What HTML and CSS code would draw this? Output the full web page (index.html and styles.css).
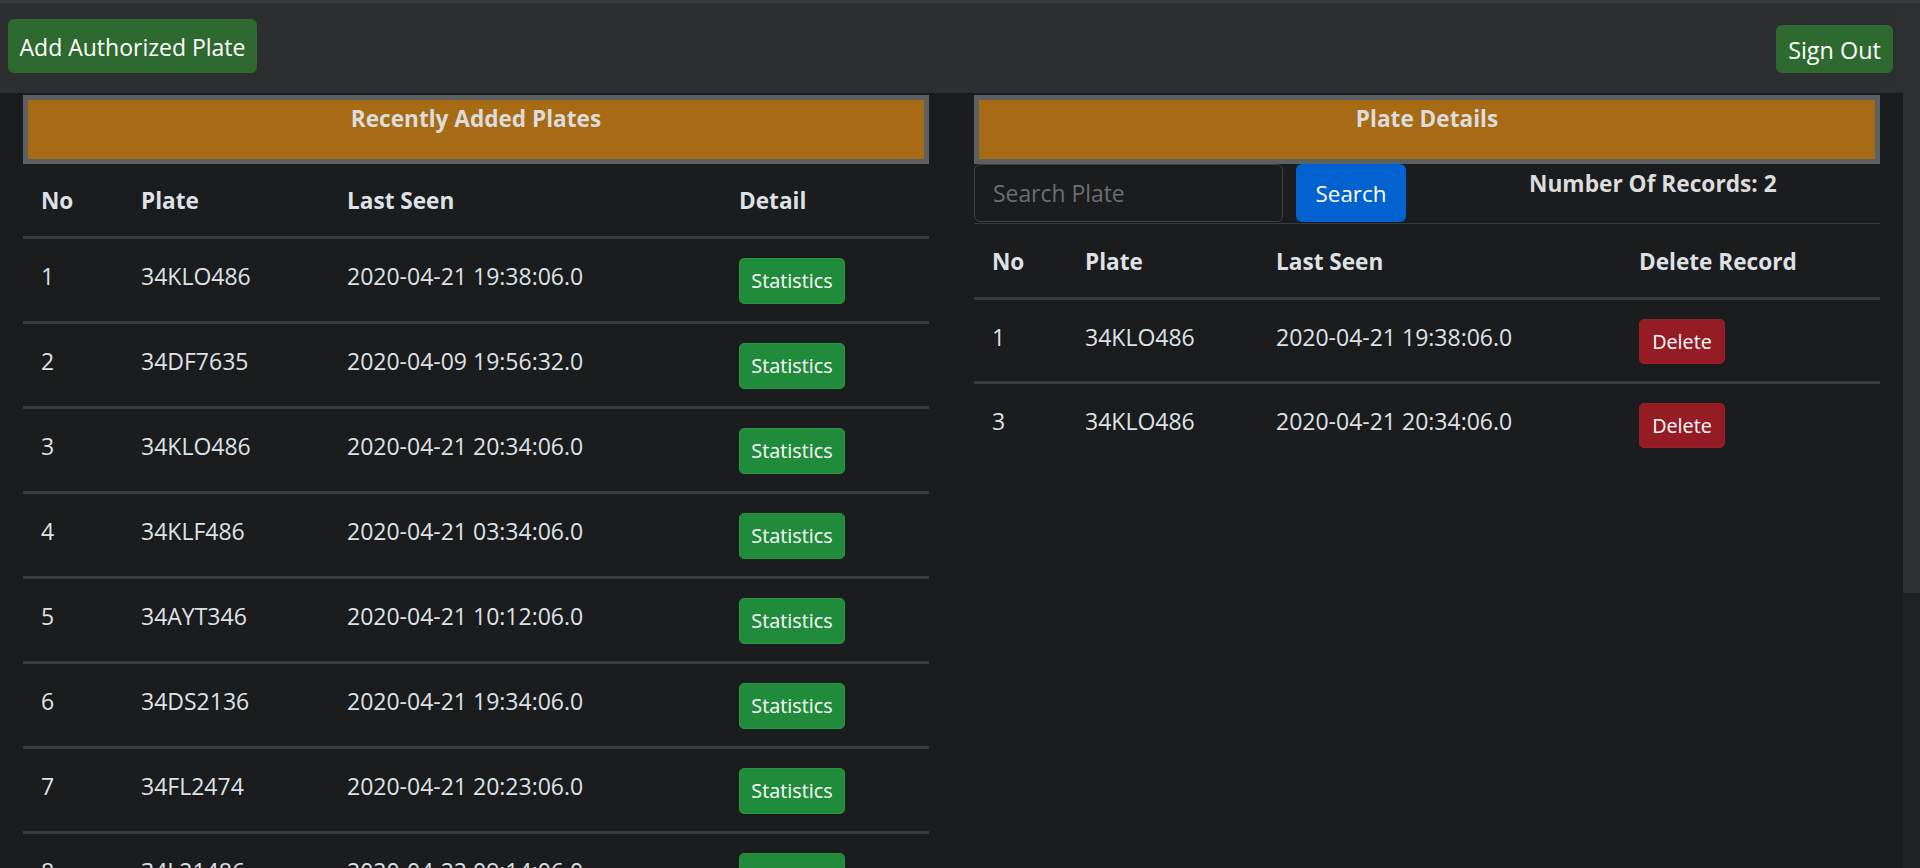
FILE: index.html
```html
<!DOCTYPE html>
<html lang="en">
<head>
<meta charset="utf-8">
<title>Authorized Plates</title>
<link rel="stylesheet" href="styles.css">
</head>
<body>
<div class="app">
  <div class="page">
    <nav class="navbar">
      <button class="btn btn-nav btn-add">Add Authorized Plate</button>
      <button class="btn btn-nav btn-signout">Sign Out</button>
    </nav>
    <main class="main">
      <section class="panel">
        <div class="panel-head"><h5 class="panel-title">Recently Added Plates</h5></div>
        <table class="table table-left">
          <colgroup>
            <col class="l-no"><col class="l-plate"><col class="l-seen"><col class="l-detail">
          </colgroup>
          <thead>
            <tr><th>No</th><th>Plate</th><th>Last Seen</th><th>Detail</th></tr>
          </thead>
          <tbody>
            <tr><td>1</td><td>34KLO486</td><td>2020-04-21 19:38:06.0</td><td><button class="btn btn-sm btn-success">Statistics</button></td></tr>
            <tr><td>2</td><td>34DF7635</td><td>2020-04-09 19:56:32.0</td><td><button class="btn btn-sm btn-success">Statistics</button></td></tr>
            <tr><td>3</td><td>34KLO486</td><td>2020-04-21 20:34:06.0</td><td><button class="btn btn-sm btn-success">Statistics</button></td></tr>
            <tr><td>4</td><td>34KLF486</td><td>2020-04-21 03:34:06.0</td><td><button class="btn btn-sm btn-success">Statistics</button></td></tr>
            <tr><td>5</td><td>34AYT346</td><td>2020-04-21 10:12:06.0</td><td><button class="btn btn-sm btn-success">Statistics</button></td></tr>
            <tr><td>6</td><td>34DS2136</td><td>2020-04-21 19:34:06.0</td><td><button class="btn btn-sm btn-success">Statistics</button></td></tr>
            <tr><td>7</td><td>34FL2474</td><td>2020-04-21 20:23:06.0</td><td><button class="btn btn-sm btn-success">Statistics</button></td></tr>
            <tr><td>8</td><td>34L21486</td><td>2020-04-22 09:14:06.0</td><td><button class="btn btn-sm btn-success">Statistics</button></td></tr>
          </tbody>
        </table>
      </section>
      <section class="panel">
        <div class="panel-head"><h5 class="panel-title">Plate Details</h5></div>
        <div class="search-row">
          <input class="search-input" type="text" placeholder="Search Plate">
          <button class="btn btn-search">Search</button>
          <h5 class="records">Number Of Records: 2</h5>
        </div>
        <table class="table table-right">
          <colgroup>
            <col class="r-no"><col class="r-plate"><col class="r-seen"><col class="r-del">
          </colgroup>
          <thead>
            <tr><th>No</th><th>Plate</th><th>Last Seen</th><th>Delete Record</th></tr>
          </thead>
          <tbody>
            <tr><td>1</td><td>34KLO486</td><td>2020-04-21 19:38:06.0</td><td><button class="btn btn-sm btn-danger">Delete</button></td></tr>
            <tr class="row-last"><td>3</td><td>34KLO486</td><td>2020-04-21 20:34:06.0</td><td><button class="btn btn-sm btn-danger">Delete</button></td></tr>
          </tbody>
        </table>
      </section>
    </main>
  </div>
  <div class="scrollbar">
    <div class="scroll-thumb"></div>
    <div class="scroll-track"></div>
  </div>
</div>
</body>
</html>
```

FILE: styles.css
```css
* { box-sizing: border-box; }

html, body {
  margin: 0;
  height: 100%;
  overflow: hidden;
}

body {
  background: #1b1c1e;
  color: #dee2e6;
  font-family: "Open Sans", "Noto Sans", Arial, sans-serif;
  font-size: 23px;
  line-height: 36px;
}

.app {
  display: flex;
  height: 100vh;
  border-top: 3px solid #3a3b3e;
}

.page {
  flex: 1;
  min-width: 0;
  overflow: hidden;
}

.scrollbar {
  width: 17px;
  display: flex;
  flex-direction: column;
}
.scroll-thumb { height: 590px; background: #2e2f31; }
.scroll-track { flex: 1; background: #202124; }

/* navbar */
.navbar {
  height: 90px;
  background: #2d2e30;
  display: flex;
  justify-content: space-between;
  align-items: flex-end;
  padding: 0 10px 20px 8px;
}

.btn {
  font-family: inherit;
  border: 0;
  color: #fff;
  cursor: pointer;
  padding: 0;
}

.btn-nav {
  background: #2e6a2f;
  border-radius: 6px;
  font-size: 23px;
  padding-top: 2px;
}
.btn-add { width: 249px; height: 54px; }
.btn-signout { width: 117px; height: 48px; font-size: 23.4px; }

/* main */
.main {
  display: grid;
  grid-template-columns: 1fr 1fr;
  column-gap: 45px;
  padding: 2px 23px 0;
}

.panel-head {
  height: 69px;
  background: #a66b14;
  border: 5px solid #5b6163;
}

.panel-title {
  margin: 0;
  padding-top: 1px;
  text-align: center;
  font-size: 22.6px;
  font-weight: 700;
  line-height: 36px;
  color: #dcdcdc;
}

/* tables */
.table {
  width: 100%;
  border-collapse: collapse;
  table-layout: fixed;
}

.table-right { margin-top: 1px; }

.table th,
.table td {
  padding: 19px 0 17px 18px;
  text-align: left;
  vertical-align: top;
  border-bottom: 3px solid #363b42;
  white-space: nowrap;
}

.table th { font-weight: 700; font-size: 22.6px; }

.table .row-last td { border-bottom: 0; }

.l-no { width: 100px; }
.l-plate { width: 206px; }
.l-seen { width: 392px; }
.l-detail { width: auto; }

.r-no { width: 93px; }
.r-plate { width: 191px; }
.r-seen { width: 363px; }
.r-del { width: auto; }

.btn-sm {
  height: 46px;
  border-radius: 5px;
  font-size: 19.8px;
  line-height: 44px;
  vertical-align: top;
}

.btn-success {
  width: 106px;
  background: #208b3a;
  border: 1px solid #27963f;
}

.btn-danger {
  width: 86px;
  height: 45px;
  background: #951c24;
  border: 1px solid #9c1f28;
}

/* search */
.search-row {
  display: flex;
  align-items: flex-start;
  padding-bottom: 1px;
  border-bottom: 1px solid #363b42;
}

.search-input {
  width: 309px;
  height: 58px;
  background: #1b1c1e;
  border: 1.5px solid #3d4249;
  border-radius: 6px;
  padding: 1px 18px 0;
  font-family: inherit;
  font-size: 22.9px;
  color: #dee2e6;
  outline: none;
}
.search-input::placeholder { color: #6b6e72; }

.btn-search {
  width: 110px;
  height: 58px;
  margin-left: 13px;
  padding-top: 1px;
  background: #0263d0;
  border-radius: 6px;
  font-size: 22.4px;
}

.records {
  margin: 2px 0 0 123px;
  font-size: 22.7px;
  font-weight: 700;
  line-height: 36px;
  color: #dcdcdc;
}
```
